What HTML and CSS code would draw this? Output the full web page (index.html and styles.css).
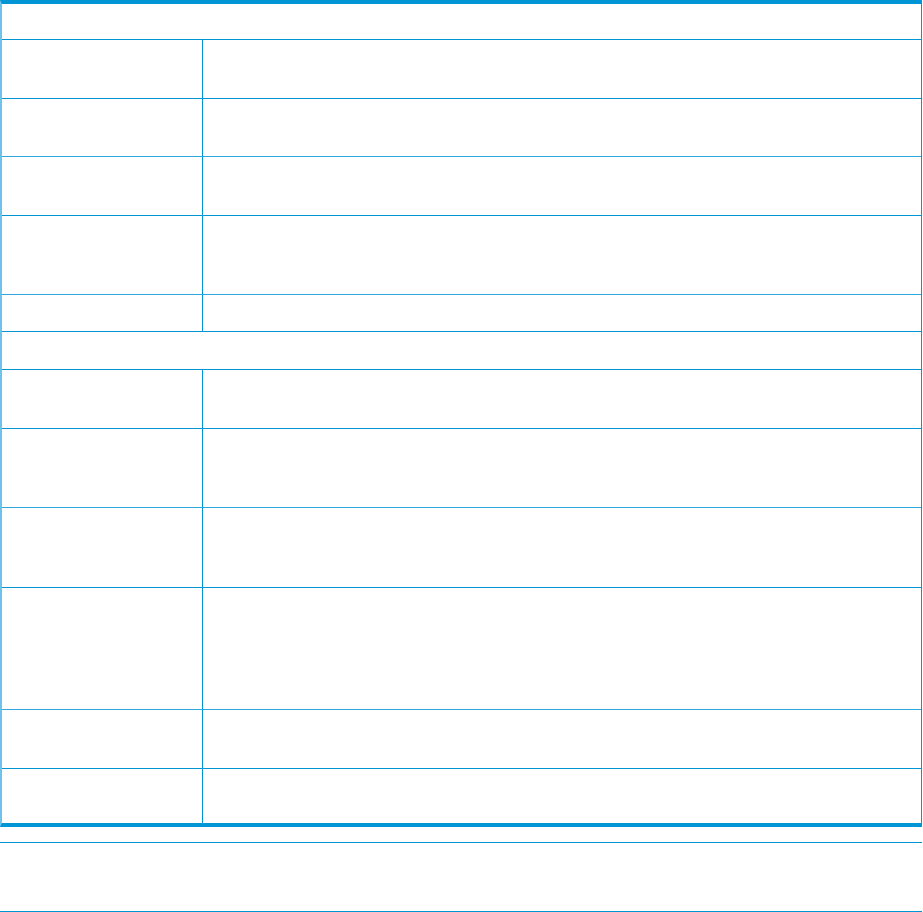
FILE: index.html
```html
<!DOCTYPE html>
<html>
<head>
    <title>Specifications</title>
    <meta name="viewport" content="width=device-width, initial-scale=1.0">
    <link rel="stylesheet" href="styles.css">
</head>
<body>
    <div class="spec-table">
        <!-- 첫 번째 섹션 -->
        <div class="row span head-a"></div>
        <div class="row two"><div class="label"></div><div class="value"></div></div>
        <div class="row two soft"><div class="label"></div><div class="value"></div></div>
        <div class="row two"><div class="label"></div><div class="value"></div></div>
        <div class="row three soft"><div class="label"></div><div class="value"></div></div>
        <div class="row one"><div class="label"></div><div class="value"></div></div>

        <!-- 두 번째 섹션 -->
        <div class="row span head-b"></div>
        <div class="row two"><div class="label"></div><div class="value"></div></div>
        <div class="row three soft"><div class="label"></div><div class="value"></div></div>
        <div class="row three"><div class="label"></div><div class="value"></div></div>
        <div class="row five soft"><div class="label"></div><div class="value"></div></div>
        <div class="row two"><div class="label"></div><div class="value"></div></div>
        <div class="row last"><div class="label"></div><div class="value"></div></div>
    </div>

    <div class="footnote"></div>
</body>
</html>
```

FILE: styles.css
```css
* {
    margin: 0;
    padding: 0;
    box-sizing: border-box;
    font-family: 'Liberation Sans', Arial, sans-serif;
}

body {
    background: white;
    color: #000;
    font-size: 14px;
}

.spec-table {
    width: 922px;
    border-top: 4px solid #0096d6;
    border-bottom: 4px solid #0096d6;
    border-left: 2px solid #6fc2e9;
    border-right: 1px solid #0096d6;
}

.row {
    display: flex;
    border-bottom: 1px solid #0096d6;
}

.row.soft {
    border-bottom-color: #2ea8de;
}

.row.last {
    border-bottom: none;
    height: 54.4px;
}

.label {
    width: 201px;
    border-right: 1px solid #0096d6;
    padding: 8px;
}

.value {
    flex: 1;
    padding: 8px;
}

.head-a {
    height: 36px;
}

.head-b {
    height: 38px;
}

.one {
    height: 37px;
}

.two {
    height: 58.5px;
}

.three {
    height: 79.7px;
}

.five {
    height: 122px;
}

.footnote {
    width: 922px;
    height: 70px;
    margin-top: 15px;
    border-top: 1px solid #0096d6;
    border-bottom: 1px solid #0096d6;
}
```
